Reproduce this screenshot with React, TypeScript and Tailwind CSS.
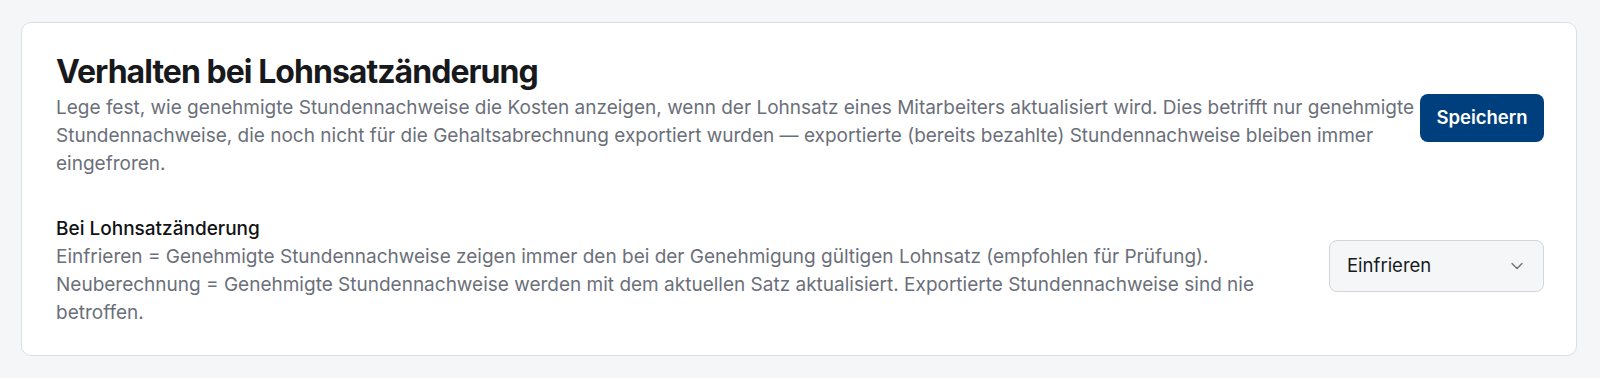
import React, { useState } from 'react';
import { ChevronDown } from 'lucide-react';

const App: React.FC = () => {
  const [mode, setMode] = useState<string>('freeze');

  return (
    <div className="min-h-screen bg-[#f5f6f8] pt-[22px] pl-[21px] pr-[23px] font-['Inter',sans-serif]">
      <div className="rounded-[10px] border border-[#dcdee3] bg-white pt-[30px] pb-[28px] pl-[34px] pr-[32px]">
        <div className="flex items-center gap-1">
          <div className="flex-1">
            <h2 className="text-[32px] leading-[38px] font-bold tracking-[-0.03em] text-[#18191c]">
              Verhalten bei Lohnsatzänderung
            </h2>
            <p className="mt-[3px] text-[19px] leading-[28px] text-[#6b6f7a]">
              Lege fest, wie genehmigte Stundennachweise die Kosten anzeigen, wenn der Lohnsatz eines Mitarbeiters
              aktualisiert wird. Dies betrifft nur genehmigte Stundennachweise, die noch nicht für die Gehaltsabrechnung
              exportiert wurden — exportierte (bereits bezahlte) Stundennachweise bleiben immer eingefroren.
            </p>
          </div>
          <button
            type="button"
            className="mt-1 h-[48px] w-[124px] shrink-0 rounded-lg bg-[#003f7d] text-[18.5px] font-semibold text-white"
          >
            Speichern
          </button>
        </div>

        <div className="mt-[37px] flex items-start gap-12">
          <div className="flex-1">
            <div className="text-[19px] leading-[28px] font-medium text-[#111214]">Bei Lohnsatzänderung</div>
            <p className="text-[19px] leading-[28px] text-[#6b6f7a]">
              Einfrieren = Genehmigte Stundennachweise zeigen immer den bei der Genehmigung gültigen Lohnsatz (empfohlen
              für Prüfung).
              <br />
              Neuberechnung = Genehmigte Stundennachweise werden mit dem aktuellen Satz aktualisiert. Exportierte
              Stundennachweise sind nie betroffen.
            </p>
          </div>
          <div className="relative mt-[25px] w-[215px] shrink-0">
            <select
              value={mode}
              onChange={(e) => setMode(e.target.value)}
              className="h-[52px] w-full appearance-none rounded-lg border border-[#d3d5da] bg-[#f5f6f8] pl-[17px] pr-10 text-[18.5px] text-[#18191c] outline-none"
            >
              <option value="freeze">Einfrieren</option>
              <option value="recalc">Neuberechnung</option>
            </select>
            <ChevronDown
              size={20}
              strokeWidth={1.6}
              className="pointer-events-none absolute right-[17px] top-1/2 -translate-y-1/2 text-[#6b6f7a]"
            />
          </div>
        </div>
      </div>
    </div>
  );
};

export default App;
